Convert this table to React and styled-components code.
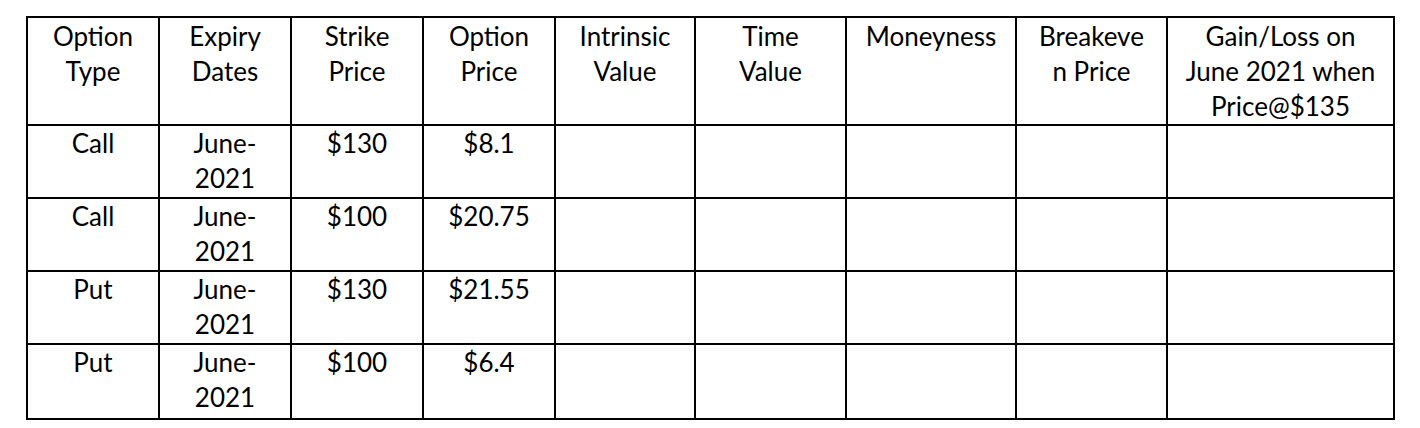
import React from 'react';
import styled, { createGlobalStyle } from 'styled-components';

const GlobalStyle = createGlobalStyle`
  html, body {
    margin: 0;
    padding: 0;
    background: #ffffff;
  }
  body {
    font-family: Lato, "Open Sans", "Liberation Sans", sans-serif;
    color: #000;
  }
`;

const columns = [132, 132, 132, 132, 140, 151, 170, 151, 227];

const headers = [
  ['Option', 'Type'],
  ['Expiry', 'Dates'],
  ['Strike', 'Price'],
  ['Option', 'Price'],
  ['Intrinsic', 'Value'],
  ['Time', 'Value'],
  ['Moneyness'],
  ['Breakeve', 'n Price'],
  ['Gain/Loss on', 'June 2021 when', 'Price@$135'],
];

const rows = [
  { type: 'Call', expiry: ['June-', '2021'], strike: '$130', price: '$8.1' },
  { type: 'Call', expiry: ['June-', '2021'], strike: '$100', price: '$20.75' },
  { type: 'Put', expiry: ['June-', '2021'], strike: '$130', price: '$21.55' },
  { type: 'Put', expiry: ['June-', '2021'], strike: '$100', price: '$6.4' },
];

const Page = styled.div`
  padding: 16px 0 0 26px;
`;

const Table = styled.div`
  display: grid;
  grid-template-columns: ${columns.map((c) => `${c}px`).join(' ')};
  grid-template-rows: 108px 73px 73px 73px 75px;
  width: max-content;
  border-left: 2px solid #000;
  border-top: 2px solid #000;
`;

const Cell = styled.div`
  box-sizing: border-box;
  border-right: 2px solid #000;
  border-bottom: 2px solid #000;
  padding-top: ${(p) => (p.$head ? '1px' : '0')};
  font-size: 26px;
  line-height: 35px;
  text-align: center;
  white-space: nowrap;
`;

const Line = styled.span`
  display: block;
`;

const Lines = ({ items }) => items.map((t, i) => <Line key={i}>{t}</Line>);

export default function App() {
  return (
    <>
      <GlobalStyle />
      <Page>
        <Table>
          {headers.map((h, i) => (
            <Cell $head key={`h${i}`}>
              <Lines items={h} />
            </Cell>
          ))}
          {rows.map((r, i) => (
            <React.Fragment key={`r${i}`}>
              <Cell>{r.type}</Cell>
              <Cell>
                <Lines items={r.expiry} />
              </Cell>
              <Cell>{r.strike}</Cell>
              <Cell>{r.price}</Cell>
              <Cell />
              <Cell />
              <Cell />
              <Cell />
              <Cell />
            </React.Fragment>
          ))}
        </Table>
      </Page>
    </>
  );
}
